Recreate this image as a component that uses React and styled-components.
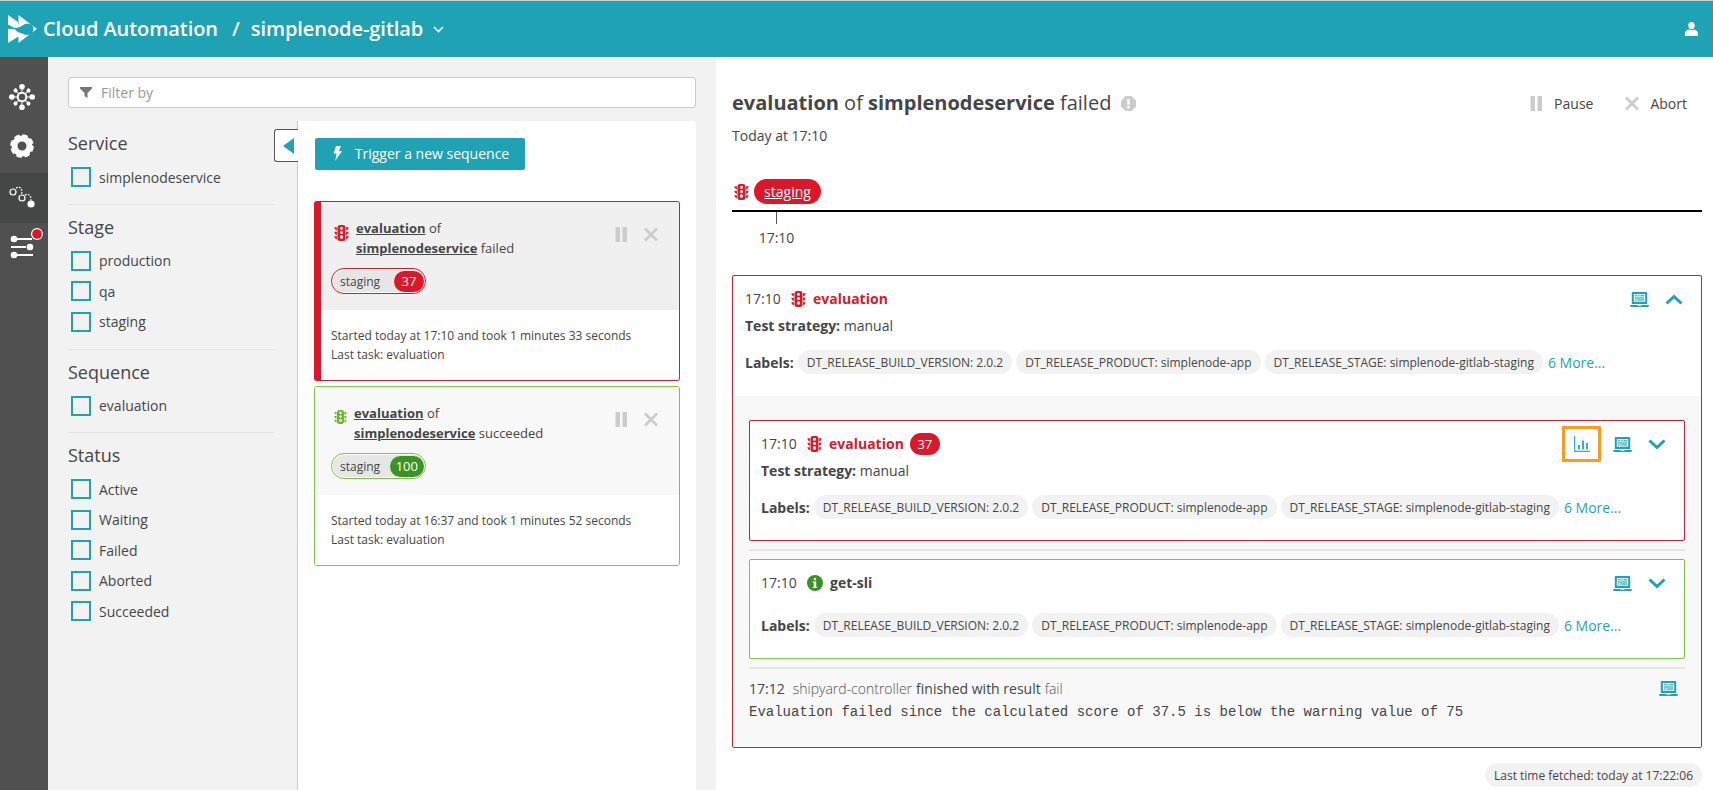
import React from 'react';
import styled, { createGlobalStyle } from 'styled-components';

const RED = '#dc172a';
const GREEN = '#7dc540';
const TEAL = '#1fa2b4';
const TEXT = '#454646';

const Global = createGlobalStyle`
  html, body { margin: 0; padding: 0; height: 100%; overflow: hidden; background: #fff; }
  body { font-family: "Open Sans", "Noto Sans", sans-serif; font-size: 14px; color: ${TEXT}; }
  * { box-sizing: border-box; }
`;

const Page = styled.div`
  width: 1713px; height: 790px; display: flex; flex-direction: column; overflow: hidden;
`;
const TopBar = styled.header`
  height: 57px; flex: none; background: ${TEAL}; border-top: 1px solid #c8d4d6;
  display: flex; align-items: center; padding: 0 15px 0 8px; color: #fff;
`;
const Brand = styled.div`
  display: flex; align-items: center; font-size: 20px; font-weight: 600; line-height: 26px;
  letter-spacing: -0.06px; color: #fff;
`;
const BrandName = styled.span` margin-left: 5px; `;
const Slash = styled.span` margin: 0 11px 0 14px; `;
const TopChevron = styled.svg` margin-left: 10px; `;
const UserSlot = styled.div` margin-left: auto; display: flex; `;
const Body = styled.div` flex: 1; display: flex; min-height: 0; `;
const Rail = styled.nav`
  width: 48px; flex: none; background: #505050; padding-top: 16px;
`;
const RailItem = styled.div`
  height: 50px; display: flex;
  background: ${p => (p.$active ? '#454646' : 'transparent')};
`;
const FilterPanel = styled.section`
  width: 668px; flex: none; background: #f2f2f2; padding: 20px 20px 0 20px;
  display: flex; flex-direction: column;
`;
const FilterInput = styled.div`
  height: 31px; flex: none; background: #fff; border: 1px solid #ccc; border-radius: 3px;
  display: flex; align-items: center; padding-left: 11px; gap: 9px; color: #999; font-size: 14px;
`;
const Columns = styled.div` flex: 1; margin-top: 13px; display: flex; min-height: 0; `;
const FilterList = styled.div` width: 229px; flex: none; padding-right: 22px; `;
const FilterGroup = styled.div`
  padding: 10px 0 11.5px;
  border-bottom: ${p => (p.$last ? 'none' : '1px solid #e4e4e4')};
`;
const GroupTitle = styled.h3`
  margin: 0 0 6.75px; font-size: 18px; line-height: 24px; font-weight: 400; color: ${TEXT};
`;
const CheckRow = styled.label`
  height: 30.5px; display: flex; align-items: center; gap: 8px; padding-left: 3px; font-size: 14px;
`;
const CheckBox = styled.span`
  width: 20px; height: 20px; border: 2px solid ${TEAL}; background: #f2f2f2; flex: none;
`;
const SequenceColumn = styled.div`
  position: relative; flex: 1; background: #fff; border-left: 1px solid #ccc;
  border-radius: 0 3px 0 0; padding: 17px 16px 0 16px;
`;
const CollapseTab = styled.button`
  position: absolute; left: -24px; top: 8px; width: 24px; height: 33px; padding: 0 0 0 8px;
  background: #fff; border: 1px solid #555; border-right: none; border-radius: 3px 0 0 3px;
  display: flex; align-items: center;
`;
const Triangle = styled.span`
  width: 0; height: 0; border-style: solid; border-width: 8px 11px 8px 0;
  border-color: transparent ${TEAL} transparent transparent;
`;
const TriggerButton = styled.button`
  width: 210px; height: 32px; margin: 0 0 31px 1px; padding: 0 0 2px 2px; background: ${TEAL}; color: #fff; border: none;
  border-radius: 2px; display: flex; align-items: center; justify-content: center; gap: 13px;
  font: 400 14px "Open Sans", sans-serif;
`;
const SeqCard = styled.article`
  height: 180px; margin-bottom: 5px; border: 1px solid ${p => (p.$failed ? RED : GREEN)};
  border-left-width: ${p => (p.$failed ? 7 : 1)}px; border-radius: 3px; overflow: hidden;
  display: flex; flex-direction: column; font-size: 12px; line-height: 19px;
`;
const SeqHead = styled.div`
  height: 108px; flex: none; padding: 16px 21px 0 ${p => (p.$failed ? 10 : 16)}px;
  background: ${p => (p.$failed ? '#f0f0f0' : '#f8f8f8')};
`;
const SeqTop = styled.div` display: flex; align-items: flex-start; `;
const SeqIcon = styled.span`
  margin: 7px 7px 0 3px; display: flex; color: ${p => (p.$failed ? RED : '#6bb72c')};
`;
const SeqTitle = styled.div` font-size: 13px; line-height: 20px; flex: 1; `;
const SeqName = styled.b` font-weight: 700; text-decoration: underline; `;
const SeqActions = styled.div` display: flex; gap: 16px; margin-top: 9px; `;
const StagePill = styled.div`
  width: 95px; height: 26px; margin-top: 10px; padding: 1px; background: #fff;
  border: 1px solid ${p => (p.$failed ? RED : GREEN)}; border-radius: 13px;
`;
const StagePillInner = styled.div`
  height: 100%; background: #e6e6e6; border-radius: 11px; display: flex; align-items: center;
  justify-content: space-between; padding-left: 7px; font-size: 12px; color: ${TEXT};
`;
const Score = styled.span`
  height: ${p => (p.$tall ? 22 : 21)}px; min-width: 30px; padding: 0 6px; border-radius: 11px;
  display: inline-flex; align-items: center; justify-content: center; color: #fff; font-size: 13px; line-height: 1;
  background: ${p => (p.$failed ? RED : '#3a9423')};
`;
const SeqFoot = styled.div` padding: 16px 0 0 ${p => (p.$failed ? 10 : 16)}px; background: #fff; flex: 1; `;
const DetailPanel = styled.main` flex: 1; min-width: 0; padding: 33px 11px 0 16px; background: #fff; `;
const DetailHead = styled.div` display: flex; align-items: center; height: 26px; `;
const DetailTitle = styled.h1`
  margin: 0; font-size: 20px; line-height: 26px; font-weight: 400; color: ${TEXT};
  b { font-weight: 700; }
`;
const NoteSlot = styled.span` margin-left: 10px; display: flex; `;
const HeadActions = styled.div` margin-left: auto; display: flex; align-items: center; padding-right: 15px; `;
const HeadAction = styled.span`
  display: flex; align-items: center; gap: 11px; margin-left: 32px; font-size: 14px;
`;
const DetailDate = styled.div` margin-top: 10px; line-height: 20px; `;
const StageLine = styled.div`
  margin-top: 33px; height: 25px; display: flex; align-items: center; gap: 5px; padding-left: 2px; color: ${RED};
`;
const StageChip = styled.span`
  width: 67px; height: 25px; background: ${RED}; color: #fff; border-radius: 13px; text-decoration: underline;
  display: flex; align-items: center; justify-content: center; font-size: 14px;
`;
const TimeAxis = styled.div` margin-top: 6px; height: 2px; background: #000; `;
const Tick = styled.div` margin-left: 44px; width: 1px; height: 12px; background: #555; `;
const TickLabel = styled.div` margin-top: 4px; width: 89px; text-align: center; line-height: 20px; `;
const RootBox = styled.section`
  margin-top: 27px; height: 473px; border: 1px solid ${RED}; border-radius: 2px; display: flex; flex-direction: column;
`;
const RootHead = styled.div` height: 120px; flex: none; padding: 13px 18px 0 12px; `;
const TaskRow = styled.div`
  display: flex; align-items: center; height: ${p => p.$h || 20}px; line-height: 20px;
`;
const Time = styled.span` width: 34px; margin-right: 12px; flex: none; `;
const RowIcon = styled.span` display: flex; margin-right: 7px; color: ${p => p.$color}; `;
const TaskName = styled.b` font-weight: 700; color: ${p => p.$color}; `;
const TaskScore = styled(Score)` margin-left: 6px; `;
const RowActions = styled.div` margin-left: auto; display: flex; align-items: center; `;
const ChartHighlight = styled.span`
  width: 39px; height: 36px; margin: -7px 12px -7px 0; border: 3px solid #ff9a1f; border-radius: 1px;
  display: flex; align-items: center; justify-content: center; color: #36b0c2;
`;
const LaptopSlot = styled.span` display: flex; color: ${TEAL}; `;
const ChevronSlot = styled.span` display: flex; margin-left: 16px; color: ${TEAL}; `;
const StrategyRow = styled.div` margin-top: ${p => p.$mt}px; line-height: 20px; b { font-weight: 700; } `;
const LabelRow = styled.div` margin-top: ${p => p.$mt}px; display: flex; align-items: center; height: 24px; `;
const LabelKey = styled.b` font-weight: 700; margin-right: 4px; `;
const LabelChip = styled.span`
  height: 24px; padding: 0 9px; margin-right: 4px; background: #f2f2f2; border-radius: 12px;
  display: flex; align-items: center; font-size: 12px; white-space: nowrap;
`;
const MoreLink = styled.a` color: ${TEAL}; margin-left: 1px; font-size: 14px; `;
const RootInner = styled.div` flex: 1; background: #f8f8f8; padding: 24px 16px 0; `;
const TaskWrap = styled.div`
  padding-bottom: 8px; margin-bottom: 8px; border-bottom: 2px solid #e6e6e6;
`;
const TaskCard = styled.article`
  height: ${p => p.$h}px; background: #fff; border: 1px solid ${p => p.$color}; border-radius: 2px;
  padding: ${p => p.$pt}px 18px 0 11px;
`;
const FootRow = styled.div`
  margin-top: 9px; display: flex; align-items: center; height: 20px; padding-right: 7px;
`;
const FootTime = styled.span` margin-right: 8px; color: ${TEXT}; `;
const FootSource = styled.span` color: #555; font-weight: 300; `;
const FootStrong = styled.span` margin: 0 4px; `;
const MonoLine = styled.pre`
  margin: 4px 0 0; font: 14px/20px "Liberation Mono", monospace; color: ${TEXT};
`;
const FetchBar = styled.div` margin-top: 15px; display: flex; justify-content: flex-end; `;
const FetchPill = styled.span`
  width: 217px; height: 24px; background: #f2f2f2; border-radius: 12px; font-size: 12px;
  display: flex; align-items: center; justify-content: center;
`;

const TrafficLight = ({ size = 15 }) => (
  <svg width={size} height={size + 1} viewBox="0 0 15 16" fill="currentColor">
    <path fillRule="evenodd" d="M6 0h3a2.500 2.500 0 0 1 2.500 2.500V13.500A2.500 2.500 0 0 1 9 16H6a2.500 2.500 0 0 1-2.500-2.500V2.500A2.500 2.500 0 0 1 6 0ZM7.500 1.700a1.500 1.500 0 1 0 0 3 1.500 1.500 0 0 0 0-3Zm0 4.300a1.500 1.500 0 1 0 0 3 1.500 1.500 0 0 0 0-3Zm0 4.300a1.700 1.700 0 1 0 0 3.400 1.700 1.700 0 0 0 0-3.400Z" />
    <path d="M.3 2.300h2.600v3.200C1.500 5.200.7 4 .3 2.300ZM14.700 2.300h-2.600v3.200c1.400-.3 2.200-1.500 2.600-3.200ZM.3 6.800h2.600V10C1.500 9.700.7 8.500.3 6.800ZM14.700 6.800h-2.600V10c1.400-.3 2.200-1.500 2.600-3.200ZM.3 11.200h2.600v3.200c-1.400-.3-2.200-1.500-2.600-3.200ZM14.700 11.200h-2.600v3.200c1.400-.3 2.200-1.500 2.600-3.200Z" />
  </svg>
);

const Laptop = () => (
  <svg width="19" height="15" viewBox="0 0 19 15">
    <path fill="currentColor" d="M2.500 0h14a.7.7 0 0 1 .7.7V12H1.800V.7a.7.7 0 0 1 .7-.7ZM0 13h19l-.6 2H.6Z" />
    <path fill="#dff3f6" d="M3.800 2h11.400v7.800H3.800z" />
    <path fill="currentColor" d="M5 3.200h2v1H5zM8 3.200h1.500v1H8zM10.500 3.200h3.500v1h-3.500zM5 5.400h9v1H5zM5 7.400h1.500v1H5zM7.500 7.400h6.500v1H7.500z" />
    <path fill="#fff" d="M7.500 12.900h4v.8h-4z" />
  </svg>
);

const Chevron = ({ up }) => (
  <svg width="18" height="11" viewBox="0 0 18 11" fill="none" stroke="currentColor" strokeWidth="3">
    <path d={up ? 'M1.500 9.500 9 2.500l7.500 7' : 'M1.500 1.500 9 8.500l7.500-7'} />
  </svg>
);

const PauseIcon = () => (
  <svg width="13" height="15" viewBox="0 0 13 15" fill="#ccc">
    <rect x="0.500" width="4.500" height="15" /><rect x="7.500" width="4.500" height="15" />
  </svg>
);
const CloseIcon = () => (
  <svg width="14" height="15" viewBox="0 0 14 15" fill="none" stroke="#ccc" strokeWidth="2.600">
    <path d="M1 1.500 13 13.500M13 1.500 1 13.500" />
  </svg>
);
const ChartIcon = () => (
  <svg width="16" height="16" viewBox="0 0 16 16" fill="currentColor">
    <path d="M0 0h1.300v14.700H16V16H0z" />
    <path d="M4 9h2v4.500H4zM8 4.500h2v9H8zM12 7h2v6.500h-2z" />
  </svg>
);
const BoltIcon = () => (
  <svg width="9" height="15" viewBox="0 0 9 15" fill="#fff">
    <path d="M3 0h5L5.800 5.200H9L2.200 15l1.400-7.400H.6z" />
  </svg>
);
const FunnelIcon = () => (
  <svg width="12" height="11" viewBox="0 0 12 11" fill="#777">
    <path d="M0 0h12v1.600L7.500 6v5L4.500 9V6L0 1.600z" />
  </svg>
);
const Logo = () => (
  <svg width="30" height="29" viewBox="0 0 30 29" fill="#fff">
    <path d="M0 0l10 7 .5 5.500-4 .5L0 9.500zM0 13.700l6.500.3 4 4v3.500L0 28zM10.500 0 29 14 24 17.500a6.500 6.500 0 0 0 0-7.500 8 8 0 0 0-9.500.5l-4 2zM10.500 17l4 1.800a9 9 0 0 0 7 .7L10.500 28z" />
  </svg>
);
const ClusterIcon = () => (
  <svg width="48" height="50" viewBox="0 0 48 50" fill="#fff">
    <g transform="translate(9 11)">
      <circle cx="13" cy="13" r="4.300" fill="none" stroke="#fff" strokeWidth="2" />
      {[0, 45, 90, 135, 180, 225, 270, 315].map(a => (
        <g key={a} transform={`rotate(${a} 13 13)`}>
          <circle cx="13" cy={a % 90 === 0 ? 2.800 : 3.800} r={a % 90 === 0 ? 2.800 : 2} />
          <rect x="12.500" y="5" width="1" height="4" />
        </g>
      ))}
    </g>
  </svg>
);
const GearIcon = () => (
  <svg width="48" height="50" viewBox="0 0 48 50" fill="none" stroke="#fff">
    <circle cx="22" cy="23" r="7.500" strokeWidth="6" />
    <circle cx="22" cy="23" r="10.300" strokeWidth="3" strokeDasharray="5.400 2.690" />
  </svg>
);
const SequenceIcon = () => (
  <svg width="48" height="50" viewBox="0 0 48 50" fill="none" stroke="#fff" strokeWidth="1.200">
    <circle cx="13" cy="19" r="3" />
    <circle cx="22" cy="25" r="3" />
    <path d="M16 15c2-1.200 4-.8 5 .5s1 3.500.5 6M25 22c2-1.200 4-.5 5 .8s1 3 .8 5" strokeDasharray="1.800 1.200" />
    <circle cx="31" cy="31" r="3.600" fill="#fff" stroke="none" />
  </svg>
);
const SettingsIcon = () => (
  <svg width="48" height="50" viewBox="0 0 48 50" fill="#fff">
    <circle cx="14" cy="16" r="3.300" /><rect x="17" y="15" width="15" height="2" />
    <rect x="11" y="23" width="15" height="2" /><circle cx="30" cy="24" r="3.300" />
    <circle cx="14" cy="32" r="3.300" /><rect x="17" y="31" width="16" height="2" />
    <circle cx="37" cy="11" r="6" /><circle cx="37" cy="11" r="4.800" fill={RED} />
  </svg>
);
const InfoIcon = () => (
  <svg width="16" height="16" viewBox="0 0 16 16">
    <circle cx="8" cy="8" r="8" fill="#3a9423" />
    <rect x="6.800" y="2.800" width="2.400" height="2.400" rx="1" fill="#fff" />
    <path d="M5.800 6.500h3.400v5.200h1v1.400H5.800v-1.400h1V8H5.800z" fill="#fff" />
  </svg>
);
const NoteOctagon = () => (
  <svg width="15" height="15" viewBox="0 0 15 15">
    <path fill="#ccc" d="M4.500 0h6L15 4.500v6L10.500 15h-6L0 10.500v-6z" />
    <rect x="6.300" y="3" width="2.400" height="5.800" fill="#fff" />
    <rect x="6.300" y="10" width="2.400" height="2.400" fill="#fff" />
  </svg>
);
const UserIcon = () => (
  <svg width="13" height="14" viewBox="0 0 13 14" fill="#fff">
    <ellipse cx="6.500" cy="3.600" rx="3.200" ry="3.600" />
    <path d="M0 14v-2.600C0 9.300 2 7.800 3.600 7.500c1.700 1 4.100 1 5.800 0C11 7.800 13 9.300 13 11.400V14z" />
  </svg>
);

const groups = [
  ['Service', ['simplenodeservice']],
  ['Stage', ['production', 'qa', 'staging']],
  ['Sequence', ['evaluation']],
  ['Status', ['Active', 'Waiting', 'Failed', 'Aborted', 'Succeeded']],
];

const SequenceCard = ({ failed, verb, score, started }) => (
  <SeqCard $failed={failed}>
    <SeqHead $failed={failed}>
      <SeqTop>
        <SeqIcon $failed={failed}><TrafficLight size={failed ? 15 : 13} /></SeqIcon>
        <SeqTitle>
          <SeqName>evaluation</SeqName> of<br />
          <SeqName>simplenodeservice</SeqName> {verb}
        </SeqTitle>
        <SeqActions><PauseIcon /><CloseIcon /></SeqActions>
      </SeqTop>
      <StagePill $failed={failed}>
        <StagePillInner>staging<Score $failed={failed}>{score}</Score></StagePillInner>
      </StagePill>
    </SeqHead>
    <SeqFoot $failed={failed}>
      Started today at {started}<br />Last task: evaluation
    </SeqFoot>
  </SeqCard>
);

const Labels = ({ mt }) => (
  <LabelRow $mt={mt}>
    <LabelKey>Labels:</LabelKey>
    <LabelChip>DT_RELEASE_BUILD_VERSION: 2.0.2</LabelChip>
    <LabelChip>DT_RELEASE_PRODUCT: simplenode-app</LabelChip>
    <LabelChip>DT_RELEASE_STAGE: simplenode-gitlab-staging</LabelChip>
    <MoreLink>6 More...</MoreLink>
  </LabelRow>
);

export default function App() {
  return (
    <Page>
      <Global />
      <TopBar>
        <Logo />
        <Brand>
          <BrandName>Cloud Automation</BrandName>
          <Slash>/</Slash>
          simplenode-gitlab
        </Brand>
        <TopChevron width="11" height="7" viewBox="0 0 11 7" fill="none" stroke="#fff" strokeWidth="1.600">
          <path d="M1 1l4.500 4.500L10 1" />
        </TopChevron>
        <UserSlot><UserIcon /></UserSlot>
      </TopBar>
      <Body>
        <Rail>
          <RailItem><ClusterIcon /></RailItem>
          <RailItem><GearIcon /></RailItem>
          <RailItem $active><SequenceIcon /></RailItem>
          <RailItem><SettingsIcon /></RailItem>
        </Rail>
        <FilterPanel>
          <FilterInput><FunnelIcon />Filter by</FilterInput>
          <Columns>
            <FilterList>
              {groups.map(([title, items], i) => (
                <FilterGroup key={title} $last={i === groups.length - 1}>
                  <GroupTitle>{title}</GroupTitle>
                  {items.map(it => (
                    <CheckRow key={it}><CheckBox />{it}</CheckRow>
                  ))}
                </FilterGroup>
              ))}
            </FilterList>
            <SequenceColumn>
              <CollapseTab><Triangle /></CollapseTab>
              <TriggerButton><BoltIcon />Trigger a new sequence</TriggerButton>
              <SequenceCard failed verb="failed" score="37" started="17:10 and took 1 minutes 33 seconds" />
              <SequenceCard verb="succeeded" score="100" started="16:37 and took 1 minutes 52 seconds" />
            </SequenceColumn>
          </Columns>
        </FilterPanel>
        <DetailPanel>
          <DetailHead>
            <DetailTitle><b>evaluation</b> of <b>simplenodeservice</b> failed</DetailTitle>
            <NoteSlot><NoteOctagon /></NoteSlot>
            <HeadActions>
              <HeadAction><PauseIcon />Pause</HeadAction>
              <HeadAction><CloseIcon />Abort</HeadAction>
            </HeadActions>
          </DetailHead>
          <DetailDate>Today at 17:10</DetailDate>
          <StageLine><TrafficLight /><StageChip>staging</StageChip></StageLine>
          <TimeAxis />
          <Tick />
          <TickLabel>17:10</TickLabel>
          <RootBox>
            <RootHead>
              <TaskRow>
                <Time>17:10</Time>
                <RowIcon $color={RED}><TrafficLight /></RowIcon>
                <TaskName $color={RED}>evaluation</TaskName>
                <RowActions>
                  <LaptopSlot><Laptop /></LaptopSlot>
                  <ChevronSlot><Chevron up /></ChevronSlot>
                </RowActions>
              </TaskRow>
              <StrategyRow $mt={7}><b>Test strategy:</b> manual</StrategyRow>
              <Labels mt={14} />
            </RootHead>
            <RootInner>
              <TaskWrap>
                <TaskCard $h={121} $color={RED} $pt={12}>
                  <TaskRow $h={22}>
                    <Time>17:10</Time>
                    <RowIcon $color={RED}><TrafficLight /></RowIcon>
                    <TaskName $color={RED}>evaluation</TaskName>
                    <TaskScore $failed $tall>37</TaskScore>
                    <RowActions>
                      <ChartHighlight><ChartIcon /></ChartHighlight>
                      <LaptopSlot><Laptop /></LaptopSlot>
                      <ChevronSlot><Chevron /></ChevronSlot>
                    </RowActions>
                  </TaskRow>
                  <StrategyRow $mt={6}><b>Test strategy:</b> manual</StrategyRow>
                  <Labels mt={14} />
                </TaskCard>
              </TaskWrap>
              <TaskWrap>
                <TaskCard $h={100} $color={GREEN} $pt={13}>
                  <TaskRow>
                    <Time>17:10</Time>
                    <RowIcon><InfoIcon /></RowIcon>
                    <TaskName>get-sli</TaskName>
                    <RowActions>
                      <LaptopSlot><Laptop /></LaptopSlot>
                      <ChevronSlot><Chevron /></ChevronSlot>
                    </RowActions>
                  </TaskRow>
                  <Labels mt={20} />
                </TaskCard>
              </TaskWrap>
              <FootRow>
                <FootTime>17:12</FootTime>
                <FootSource>shipyard-controller</FootSource>
                <FootStrong>finished with result</FootStrong>
                <FootSource>fail</FootSource>
                <RowActions><LaptopSlot><Laptop /></LaptopSlot></RowActions>
              </FootRow>
              <MonoLine>Evaluation failed since the calculated score of 37.5 is below the warning value of 75</MonoLine>
            </RootInner>
          </RootBox>
          <FetchBar><FetchPill>Last time fetched: today at 17:22:06</FetchPill></FetchBar>
        </DetailPanel>
      </Body>
    </Page>
  );
}
